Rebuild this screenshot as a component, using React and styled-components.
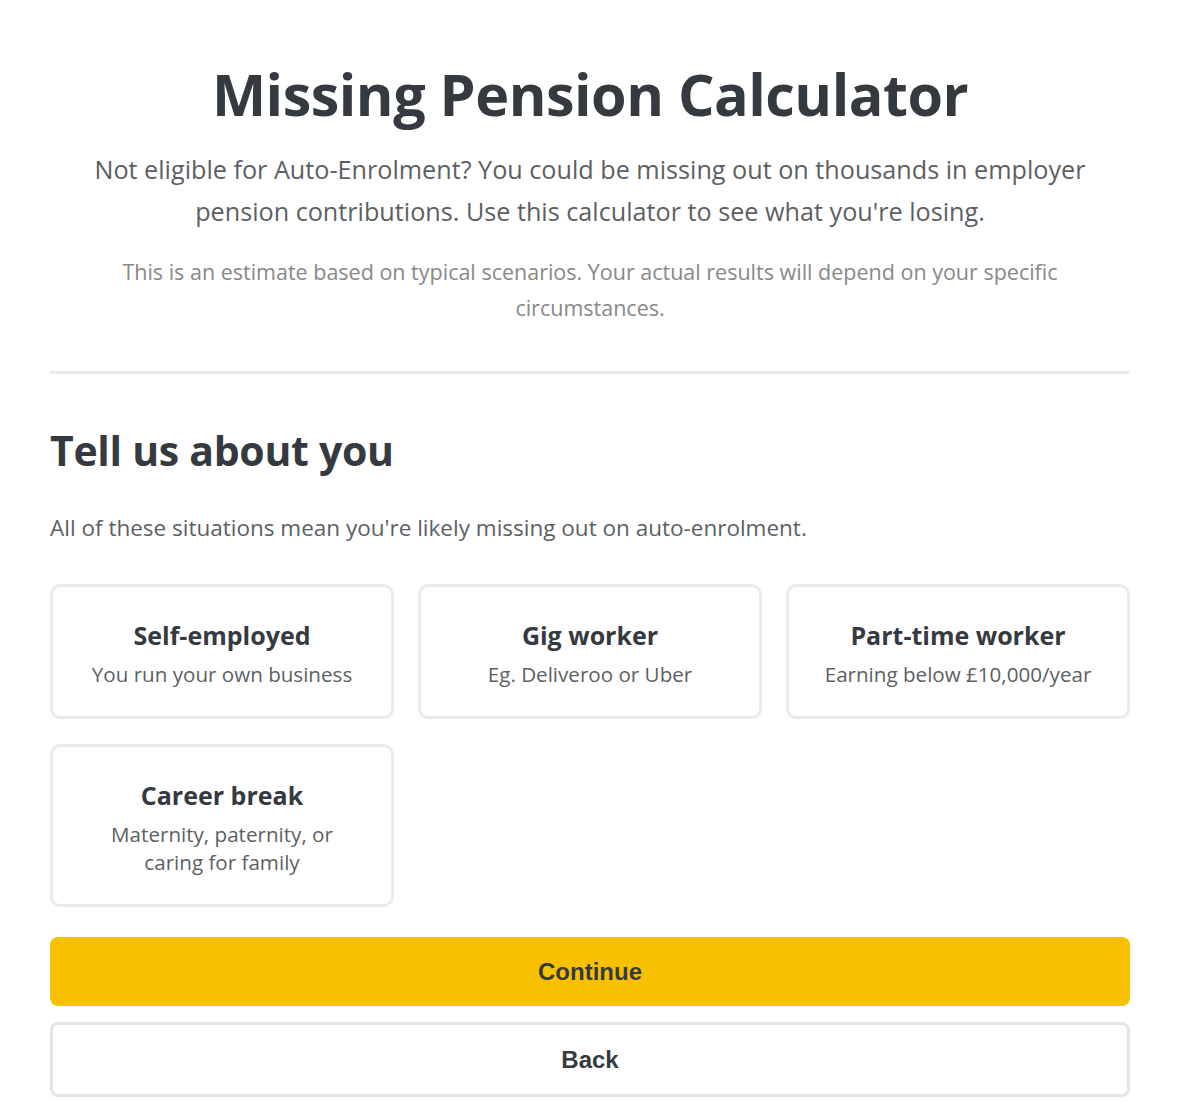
import React from "react";
import styled, { createGlobalStyle } from "styled-components";

const GlobalStyle = createGlobalStyle`
  html, body {
    margin: 0;
    padding: 0;
    background: #ffffff;
  }
  body {
    font-family: "Open Sans", "Noto Sans", sans-serif;
    color: #343a40;
  }
`;

const Page = styled.div`
  width: 1080px;
  margin: 0 53px 0 50px;
  padding: 57px 0 0;
`;

const Intro = styled.header`
  text-align: center;
  padding-bottom: 45px;
  border-bottom: 3px solid #e9ecef;
`;

const Title = styled.h1`
  margin: 0 0 17px;
  font-size: 57.5px;
  line-height: 74px;
  font-weight: 700;
  color: #343a40;
  letter-spacing: -0.5px;
`;

const Lead = styled.p`
  margin: 0 auto 22px;
  max-width: 1010px;
  font-size: 25.2px;
  line-height: 42px;
  color: #5c5f63;
`;

const Note = styled.p`
  margin: 0 auto;
  max-width: 960px;
  font-size: 21.5px;
  line-height: 36px;
  color: #888888;
`;

const Section = styled.section`
  padding-top: 49px;
`;

const Heading = styled.h2`
  margin: 0 0 35px;
  font-size: 41px;
  line-height: 54px;
  font-weight: 700;
  color: #343a40;
  letter-spacing: -0.3px;
`;

const Hint = styled.p`
  margin: 0 0 40px;
  font-size: 22.5px;
  line-height: 32px;
  color: #5c5f63;
`;

const Options = styled.div`
  display: grid;
  grid-template-columns: repeat(3, 1fr);
  gap: 25px 24px;
  margin-bottom: 30px;
`;

const Option = styled.button`
  display: flex;
  flex-direction: column;
  align-items: center;
  gap: 8px;
  padding: 31px 32px 28px;
  background: #ffffff;
  border: 3px solid #e9ecef;
  border-radius: 10px;
  font-family: inherit;
  text-align: center;
  cursor: pointer;
`;

const OptionTitle = styled.span`
  font-size: 25px;
  line-height: 34px;
  font-weight: 700;
  color: #343a40;
`;

const OptionText = styled.span`
  font-size: 20.6px;
  line-height: 28px;
  color: #5c5f63;
`;

const Actions = styled.div`
  display: flex;
  flex-direction: column;
  gap: 16px;
`;

const Button = styled.button`
  width: 100%;
  height: ${({ variant }) => (variant === "primary" ? "69px" : "75px")};
  border-radius: 8px;
  border: ${({ variant }) =>
    variant === "primary" ? "none" : "3px solid #e2e4e8"};
  background: ${({ variant }) => (variant === "primary" ? "#f8c100" : "#ffffff")};
  color: #343a40;
  font-family: "Liberation Sans", Arial, sans-serif;
  font-size: 24px;
  font-weight: 700;
  cursor: pointer;
`;

const options = [
  { title: "Self-employed", text: "You run your own business" },
  { title: "Gig worker", text: "Eg. Deliveroo or Uber" },
  { title: "Part-time worker", text: "Earning below £10,000/year" },
  { title: "Career break", text: "Maternity, paternity, or caring for family" },
];

const App = () => {
  return (
    <>
      <GlobalStyle />
      <Page>
        <Intro>
          <Title>Missing Pension Calculator</Title>
          <Lead>
            Not eligible for Auto-Enrolment? You could be missing out on
            thousands in employer pension contributions. Use this calculator
            to see what you're losing.
          </Lead>
          <Note>
            This is an estimate based on typical scenarios. Your actual results
            will depend on your specific circumstances.
          </Note>
        </Intro>

        <Section>
          <Heading>Tell us about you</Heading>
          <Hint>
            All of these situations mean you're likely missing out on
            auto-enrolment.
          </Hint>
          <Options>
            {options.map((o) => (
              <Option key={o.title} type="button">
                <OptionTitle>{o.title}</OptionTitle>
                <OptionText>{o.text}</OptionText>
              </Option>
            ))}
          </Options>
          <Actions>
            <Button variant="primary">Continue</Button>
            <Button>Back</Button>
          </Actions>
        </Section>
      </Page>
    </>
  );
};

export default App;
